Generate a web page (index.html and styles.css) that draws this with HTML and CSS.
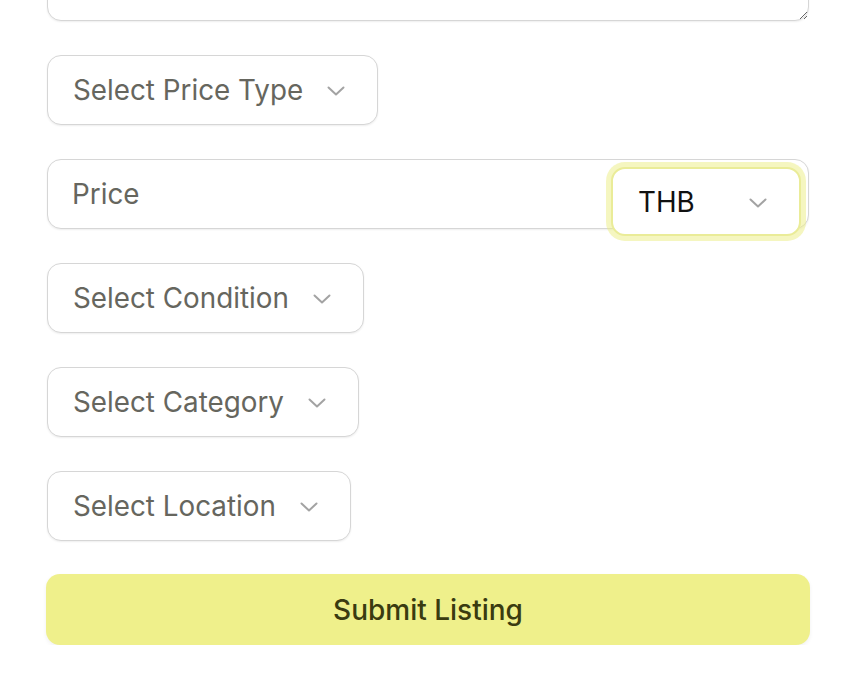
FILE: index.html
```html
<!DOCTYPE html>
<html lang="en">
<head>
<meta charset="utf-8">
<title>Listing form</title>
<link rel="stylesheet" href="styles.css">
</head>
<body>
<form class="form">
  <textarea class="textarea" aria-label="Description"></textarea>

  <button type="button" class="select">
    <span>Select Price Type</span>
    <svg class="chev" width="18" height="10" viewBox="0 0 18 10"><path d="M1.5 1.5 L9 8.5 L16.5 1.5" fill="none" stroke="#a3a3a3" stroke-width="2" stroke-linecap="round" stroke-linejoin="round"/></svg>
  </button>

  <div class="price-row">
    <input class="input" type="text" placeholder="Price">
    <button type="button" class="currency">
      <span>THB</span>
      <svg class="chev" width="18" height="10" viewBox="0 0 18 10"><path d="M1.5 1.5 L9 8.5 L16.5 1.5" fill="none" stroke="#a3a3a3" stroke-width="2" stroke-linecap="round" stroke-linejoin="round"/></svg>
    </button>
  </div>

  <button type="button" class="select">
    <span>Select Condition</span>
    <svg class="chev" width="18" height="10" viewBox="0 0 18 10"><path d="M1.5 1.5 L9 8.5 L16.5 1.5" fill="none" stroke="#a3a3a3" stroke-width="2" stroke-linecap="round" stroke-linejoin="round"/></svg>
  </button>

  <button type="button" class="select">
    <span>Select Category</span>
    <svg class="chev" width="18" height="10" viewBox="0 0 18 10"><path d="M1.5 1.5 L9 8.5 L16.5 1.5" fill="none" stroke="#a3a3a3" stroke-width="2" stroke-linecap="round" stroke-linejoin="round"/></svg>
  </button>

  <button type="button" class="select">
    <span>Select Location</span>
    <svg class="chev" width="18" height="10" viewBox="0 0 18 10"><path d="M1.5 1.5 L9 8.5 L16.5 1.5" fill="none" stroke="#a3a3a3" stroke-width="2" stroke-linecap="round" stroke-linejoin="round"/></svg>
  </button>

  <button type="submit" class="submit">Submit Listing</button>
</form>
</body>
</html>
```

FILE: styles.css
```css
html, body {
  margin: 0;
  padding: 0;
  background: #ffffff;
}

body {
  font-family: Inter, "Liberation Sans", sans-serif;
  overflow: hidden;
}

.form {
  width: 763px;
  margin: -60px 0 0 47px;
  display: flex;
  flex-direction: column;
  align-items: flex-start;
  gap: 34px;
}

.textarea {
  box-sizing: border-box;
  width: 762px;
  height: 81px;
  border: 1.5px solid #d6d6d6;
  border-radius: 14px;
  box-shadow: 0 1px 2px rgba(0, 0, 0, 0.07);
  font-family: inherit;
  font-size: 28px;
  display: block;
  outline: none;
}

.select {
  box-sizing: border-box;
  height: 70px;
  display: flex;
  align-items: center;
  gap: 24px;
  padding: 0 32px 0 25px;
  background: #fff;
  border: 1.5px solid #d6d6d6;
  border-radius: 14px;
  box-shadow: 0 1px 2px rgba(0, 0, 0, 0.07);
  font-family: inherit;
  font-size: 27.8px;
  color: #66665e;
  cursor: pointer;
}

.chev {
  display: block;
  flex: none;
  margin-top: 2px;
}

.price-row {
  position: relative;
  width: 762px;
}

.input {
  box-sizing: border-box;
  width: 762px;
  height: 70px;
  padding: 0 24px;
  border: 1.5px solid #d6d6d6;
  border-radius: 14px;
  box-shadow: 0 1px 2px rgba(0, 0, 0, 0.07);
  font-family: inherit;
  font-size: 27.8px;
  color: #111;
  outline: none;
  display: block;
}

.input::placeholder {
  color: #66665e;
}

.currency {
  position: absolute;
  left: 564px;
  top: 8px;
  box-sizing: border-box;
  width: 190px;
  height: 69px;
  display: flex;
  align-items: center;
  justify-content: space-between;
  padding: 0 32px 0 25px;
  background: #fff;
  border: 2px solid #eaec98;
  border-radius: 14px;
  box-shadow: 0 0 0 5px rgba(236, 238, 130, 0.5);
  font-family: inherit;
  font-size: 27.8px;
  color: #111;
  cursor: pointer;
}

.submit {
  box-sizing: border-box;
  width: 764px;
  height: 71px;
  margin-left: -1px;
  margin-top: -1px;
  background: #eff08b;
  border: none;
  border-radius: 14px;
  box-shadow: 0 2px 4px rgba(0, 0, 0, 0.06);
  font-family: inherit;
  font-size: 28px;
  font-weight: 500;
  color: #3a3b10;
  cursor: pointer;
}
```
